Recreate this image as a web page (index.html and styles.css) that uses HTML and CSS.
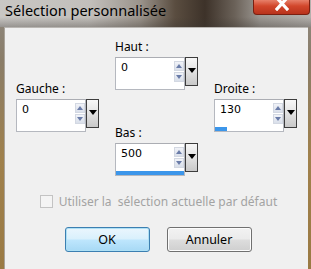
FILE: index.html
```html
<!DOCTYPE html>
<html lang="fr">
<head>
<meta charset="UTF-8">
<title>Sélection personnalisée</title>
<link rel="stylesheet" href="styles.css">
</head>
<body>

<div class="fenetre">
    <div class="titre">
        <span class="titreTexte">Sélection personnalisée</span>
        <div class="fermer">
            <svg width="14" height="11" viewBox="0 0 14 11">
                <path d="M2 -2 L12 9 M12 -2 L2 9" stroke="#fff" stroke-width="3.2" stroke-linecap="square"/>
            </svg>
        </div>
    </div>

    <div class="client">
        <div class="champs">
            <div class="colonne colonneCote">
                <div class="champ">
                    <label>Gauche :</label>
                    <div class="ligneChamp">
                        <div class="boite">
                            <div class="boiteHaut">
                                <span class="valeur">0</span>
                                <div class="spin"><span class="up"></span><span class="down"></span></div>
                            </div>
                            <div class="barre"></div>
                        </div>
                        <div class="deroulant"></div>
                    </div>
                </div>
            </div>

            <div class="colonne">
                <div class="champ">
                    <label>Haut :</label>
                    <div class="ligneChamp">
                        <div class="boite">
                            <div class="boiteHaut">
                                <span class="valeur">0</span>
                                <div class="spin"><span class="up"></span><span class="down"></span></div>
                            </div>
                            <div class="barre"></div>
                        </div>
                        <div class="deroulant"></div>
                    </div>
                </div>
                <div class="champ champBas">
                    <label>Bas :</label>
                    <div class="ligneChamp">
                        <div class="boite">
                            <div class="boiteHaut">
                                <span class="valeur">500</span>
                                <div class="spin"><span class="up"></span><span class="down"></span></div>
                            </div>
                            <div class="barre"><div class="remplissage" style="width: 100%"></div></div>
                        </div>
                        <div class="deroulant"></div>
                    </div>
                </div>
            </div>

            <div class="colonne colonneCote">
                <div class="champ">
                    <label>Droite :</label>
                    <div class="ligneChamp">
                        <div class="boite">
                            <div class="boiteHaut">
                                <span class="valeur">130</span>
                                <div class="spin"><span class="up"></span><span class="down"></span></div>
                            </div>
                            <div class="barre"><div class="remplissage" style="width: 12px"></div></div>
                        </div>
                        <div class="deroulant"></div>
                    </div>
                </div>
            </div>
        </div>

        <div class="option">
            <span class="caseCocher"></span>
            <span>Utiliser la&nbsp; sélection actuelle par défaut</span>
        </div>

        <div class="boutons">
            <button type="button" class="bouton boutonDefaut">OK</button>
            <button type="button" class="bouton">Annuler</button>
        </div>
    </div>
</div>

</body>
</html>
```

FILE: styles.css
```css
body {
    margin: 0;
    font-family: "Noto Sans", "Open Sans", sans-serif;
    font-size: 12px;
    color: #000;
}

.fenetre {
    width: 311px;
    height: 269px;
    overflow: hidden;
    background: linear-gradient(to bottom, #8f8a84 0px, #8a7d68 60px, #a0814c 160px, #9a7a44 269px);
}

.titre {
    height: 27px;
    display: flex;
    align-items: flex-start;
    justify-content: space-between;
    background:
        linear-gradient(to bottom, rgba(255, 255, 255, 0) 0px, rgba(255, 255, 255, 0) 17px, rgba(60, 55, 50, 0.35) 27px),
        linear-gradient(to right, #c9c7c4 0px, #c2bfbb 90px, #9b948c 140px, #5a4d40 175px, #3d3229 205px, #6b6259 235px, #9c9893 260px, #b4b1ad 311px);
}

.titreTexte {
    font-size: 14.5px;
    line-height: 20px;
    padding-left: 5px;
    color: #000;
}

.fermer {
    width: 57px;
    height: 15px;
    margin-right: 1px;
    box-sizing: border-box;
    border: 1px solid #7a1f10;
    border-top: none;
    border-radius: 0 0 4px 4px;
    background: linear-gradient(to bottom, #e7806a 0px, #d2472c 6px, #b5301a 15px);
    display: flex;
    justify-content: center;
    align-items: flex-start;
}

.client {
    margin-left: 4px;
    width: 304px;
    height: 242px;
    background: #f0f0f0;
    border-top: 1px solid #b9b6b2;
    border-left: 1px solid #a9a39a;
    box-sizing: border-box;
}

.champs {
    display: flex;
    gap: 16px;
    padding-left: 11px;
    padding-top: 11px;
}

.colonne {
    display: flex;
    flex-direction: column;
    width: 83px;
}

.colonneCote {
    padding-top: 42px;
}

.champ label {
    display: block;
    line-height: 16px;
    margin-bottom: 2px;
}

.champBas {
    margin-top: 35px;
}

.ligneChamp {
    display: flex;
    align-items: flex-start;
}

.boite {
    width: 70px;
    height: 33px;
    box-sizing: border-box;
    border: 1px solid #b5b8bf;
    border-top-color: #abadb3;
    background: #fff;
    display: flex;
    flex-direction: column;
    justify-content: space-between;
}

.boiteHaut {
    display: flex;
    justify-content: space-between;
    padding: 3px 0 0 5px;
}

.valeur {
    font-family: "DejaVu Sans", Verdana, sans-serif;
    font-size: 11px;
    line-height: 14px;
}

.spin {
    display: flex;
    flex-direction: column;
    gap: 1px;
    width: 10px;
}

.spin span {
    height: 10px;
    box-sizing: border-box;
    border: 1px solid #d3d8e2;
    background: linear-gradient(to bottom, #f1f3f8, #d9dfea);
    position: relative;
}

.spin span::after {
    content: "";
    position: absolute;
    left: 1px;
    border-left: 3px solid transparent;
    border-right: 3px solid transparent;
}

.spin .up::after {
    top: 2px;
    border-bottom: 4px solid #6a7ca8;
}

.spin .down::after {
    top: 2px;
    border-top: 4px solid #6a7ca8;
}

.barre {
    height: 4px;
}

.remplissage {
    height: 4px;
    background: #3c96ea;
}

.deroulant {
    width: 13px;
    height: 29px;
    box-sizing: border-box;
    border: 1px solid #3d3d3d;
    background: linear-gradient(to bottom, #f7f7f7, #e2e2e2 50%, #c9c9c9);
    display: flex;
    justify-content: center;
    padding-top: 10px;
}

.deroulant::after {
    content: "";
    border-left: 4px solid transparent;
    border-right: 4px solid transparent;
    border-top: 5px solid #000;
    height: 0;
}

.option {
    display: flex;
    justify-content: center;
    align-items: center;
    gap: 6px;
    margin-top: 18px;
    padding-left: 4px;
    color: #a3a3a3;
    line-height: 15px;
}

.caseCocher {
    width: 13px;
    height: 13px;
    box-sizing: border-box;
    border: 1px solid #c3c3c3;
    background: #f4f4f4;
}

.boutons {
    display: flex;
    justify-content: center;
    gap: 17px;
    margin-top: 18px;
    padding-left: 3px;
}

.bouton {
    width: 85px;
    height: 25px;
    font-family: "Noto Sans", "Open Sans", sans-serif;
    font-size: 12.5px;
    color: #000;
    border: 1px solid #707070;
    border-radius: 3px;
    background: linear-gradient(to bottom, #f2f2f2 0%, #ebebeb 48%, #dddddd 52%, #cfcfcf 100%);
    box-shadow: inset 0 0 0 1px #fcfcfc;
    padding: 0;
}

.boutonDefaut {
    border-color: #3c7fb1;
    background: linear-gradient(to bottom, #eaf6fd 0%, #d9f0fc 48%, #bee6fd 52%, #a7d9f5 100%);
    box-shadow: inset 0 0 0 1px #aee0f5;
}
```
